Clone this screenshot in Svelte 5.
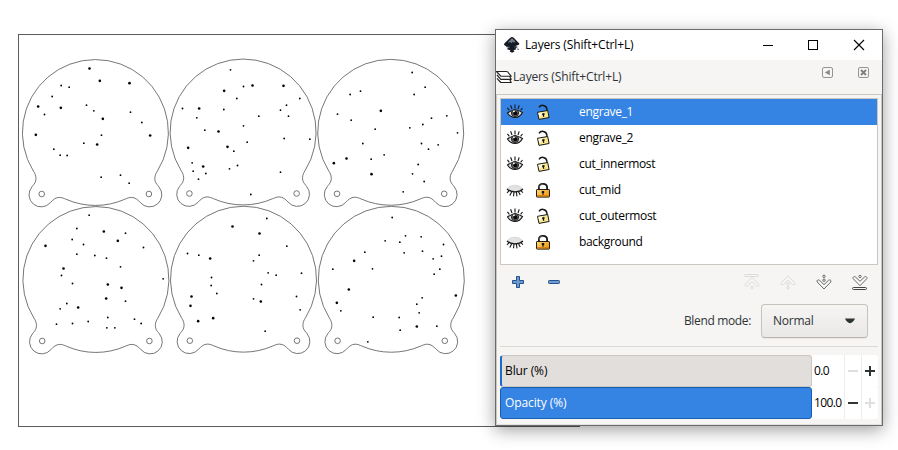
<script>
  const outline =
    'M-62 38.7A73 73 0 1 1 62 38.7C59.2 42.5 58.2 48 61.5 52C62.4 53 63 53.7 63.5 54.5A12.1 12.1 0 0 1 45 70.2C42.4 67.5 40 65 36 65C33.5 65 31.5 66 29.5 66.8A73 73 0 0 1 -29.5 66.8C-31.5 66 -33.5 65 -36 65C-40 65 -42.4 67.5 -45 70.2A12.1 12.1 0 0 1 -63.5 54.5C-63 53.7 -62.4 53 -61.5 52C-58.2 48 -59.2 42.5 -62 38.7Z';

  // Stars are stored in thirds of a pixel from each plate's origin: large ones and small ones.
  const plates = [
    { cx: 95.4, cy: 132.4, x: 10, y: 50,
      big: [[238,55],[269,92],[358,99],[84,169],[152,173],[278,206],[77,254],[420,256],[261,283]],
      small: [[153,106],[177,111],[126,139],[103,193],[229,165],[251,182],[361,186],[395,217],[274,255],[221,279],[131,297],[150,315],[171,316],[273,381],[331,375],[357,399]] },
    { cx: 243.1, cy: 131.9, x: 165, y: 50,
      big: [[177,122],[262,106],[355,107],[102,175],[160,244],[69,293],[187,290],[114,349]],
      small: [[196,59],[235,109],[215,145],[404,145],[52,175],[176,178],[364,165],[346,180],[95,203],[281,198],[370,198],[119,240],[235,227],[357,265],[434,267],[246,276],[206,303],[81,338],[217,346],[193,356],[84,363],[122,370],[100,387],[346,366],[257,433]] },
    { cx: 390.7, cy: 132.2, x: 310, y: 50,
      big: [[212,182],[109,325],[71,339],[184,372]],
      small: [[306,67],[345,111],[120,133],[151,123],[312,133],[82,192],[123,210],[410,197],[364,204],[338,223],[299,233],[195,237],[442,248],[158,280],[334,280],[384,284],[355,297],[222,314],[183,327],[324,343],[307,371],[342,394],[279,425]] },
    { cx: 95.9, cy: 279.4, x: 10, y: 200,
      big: [[281,94],[323,122],[106,137],[160,205],[293,253],[334,263],[288,295],[204,322]],
      small: [[237,45],[200,85],[346,99],[186,118],[220,133],[400,142],[200,162],[254,166],[289,174],[331,200],[154,226],[187,250],[459,236],[346,303],[170,310],[150,326],[293,352],[373,357],[139,372],[187,370],[234,364],[393,370],[290,383],[314,383]] },
    { cx: 243.5, cy: 279.1, x: 165, y: 200,
      big: [[202,79],[283,100],[135,175],[79,289],[76,317],[287,304],[99,363],[144,354]],
      small: [[305,55],[365,138],[67,160],[101,165],[282,165],[265,182],[309,218],[333,225],[409,219],[139,232],[138,256],[289,253],[155,280],[265,296],[394,289],[405,329],[300,393]] },
    { cx: 391.3, cy: 279.2, x: 310, y: 200,
      big: [[132,182],[116,268],[80,308],[437,286],[320,379]],
      small: [[246,52],[286,107],[333,110],[225,122],[269,126],[400,133],[164,156],[282,158],[337,153],[394,168],[369,176],[68,207],[187,206],[389,207],[372,222],[336,293],[320,312],[327,338],[92,332],[189,351],[267,352],[380,378],[270,390],[173,425]] }
  ];

  const layers = [
    { name: 'engrave_1', visible: true, locked: false, selected: true },
    { name: 'engrave_2', visible: true, locked: false },
    { name: 'cut_innermost', visible: true, locked: false },
    { name: 'cut_mid', visible: false, locked: true },
    { name: 'cut_outermost', visible: true, locked: false },
    { name: 'background', visible: false, locked: true }
  ];
</script>

<main>
  <svg class="canvas" width="898" height="450" viewBox="0 0 898 450">
    <rect x="18.5" y="34.5" width="561" height="392" fill="#fff" stroke="#5c5c5c" />
    {#each plates as p}
      <g transform="translate({p.cx} {p.cy})" fill="none" stroke="#666" stroke-width=".9">
        <path d={outline} />
        <circle cx="-53.7" cy="61.6" r="2.8" />
        <circle cx="53.5" cy="61.6" r="2.8" />
      </g>
      {#each p.big as d}<circle cx={p.x + (d[0] + 0.5) / 3} cy={p.y + (d[1] + 0.5) / 3} r="1.3" />{/each}
      {#each p.small as d}<circle cx={p.x + (d[0] + 0.5) / 3} cy={p.y + (d[1] + 0.5) / 3} r=".9" />{/each}
    {/each}
  </svg>

  <section class="dialog">
    <header class="titlebar">
      <svg width="18" height="18" viewBox="0 0 18 18">
        <path d="M9 1Q10 1 11 2L16 7.2Q17 8.6 15 9.1L12.5 10L15 11L12.5 12L13.4 13.2L10.5 14.2L11.5 15.6L9 16.8L6.7 15.5L7.4 14.3L3.5 13L6 11.8L3 10.3L1.2 9Q.7 8 1.8 7L7 2Q8 1 9 1Z" fill="#161a22" />
        <path d="M9 2L12.5 5.6L11 6.7L9.7 5.7L8.5 7.3L7 6L5 7L5.4 5.7Z" fill="#6f7b8d" />
        <path d="M3 10.6L7 11.4M14.2 13L16 13.4M11 11L13 10.7" stroke="#4b5566" />
      </svg>
      <span class="caption">Layers (Shift+Ctrl+L)</span>
      <svg class="winbtns" width="110" height="14" viewBox="0 0 110 14" fill="none" stroke="#000">
        <path d="M3 7.5H13" />
        <rect x="48.5" y="2.5" width="9" height="9" />
        <path d="M94 2L104 12M104 2L94 12" stroke-width="1.1" />
      </svg>
    </header>

    <div class="dockbar">
      <svg width="16" height="14" viewBox="0 0 16 14" fill="#fff" stroke="#222" stroke-width="1.15" stroke-linejoin="round">
        <path d="M1 8.3L4.8 12.5H15.2L13.5 9" />
        <path d="M1 5L4.8 9.3H15.2L13.5 6" />
        <path d="M.5 1.5H10.3Q12 1.7 12.5 3L15.2 6.2H4.8Z" />
      </svg>
      <span class="caption">Layers (Shift+Ctrl+L)</span>
      <svg class="dockbtns" width="48" height="11" viewBox="0 0 48 11" fill="none" stroke="#929595">
        <rect x=".5" y=".5" width="10" height="10" rx="1.5" />
        <path d="M7.8 2.7V8.3L2.8 5.5Z" fill="#868a8a" stroke="none" />
        <rect x="36.5" y=".5" width="10" height="10" rx="1.5" />
        <path d="M39 3L44 8M44 3L39 8" stroke="#7e8282" stroke-width="2" />
      </svg>
    </div>

    <div class="panel">
      <ul class="layers">
        {#each layers as l}
          <li class:selected={l.selected}>
            {#if l.visible}
              <svg class="eye" width="18" height="16" viewBox="0 0 18 16" fill="none" stroke="#171717">
                <path d="M1.5 9Q8.5 3.2 16.5 8.5Q14 13.4 8.8 13.4Q4 13.2 1.5 9Z" fill="#dededc" stroke-width="1.1" />
                <path d="M3.4 6.3L1.4 3.8M6 5L4.6 1.3M9 4.6V.6M12 5L13.2 1.3M14.6 6.3L16.5 4" stroke-width="1.1" />
                <circle cx="9" cy="9" r="3.6" fill="#606060" stroke="#2b2b2b" />
                <circle cx="9.3" cy="9.2" r="2" fill="#080808" stroke="none" />
                <circle cx="7.9" cy="7.3" r=".9" fill="#fff" stroke="none" />
              </svg>
            {:else}
              <svg class="eye" width="18" height="16" viewBox="0 0 18 16" fill="none" stroke="#1c1c1c">
                <path d="M1 7.5Q3 3.2 9 3.2Q15 3.4 17 7.5Q13.5 10 9 10Q4 10 1 7.5Z" fill="#e2e2e2" stroke="#c8c8c8" stroke-width=".6" />
                <path d="M1 7Q4.2 9.8 9 9.8Q14 9.8 17 7" stroke-width="1.2" />
                <path d="M3.4 8.4L1 10.8M5.8 9.4L3.8 13.4M8 10L7.5 14.3M10.3 10L11 14.3M12.4 9.4L14.2 13M14.6 8.4L16.9 10.6" stroke-width="1.15" />
              </svg>
            {/if}
            {#if l.locked}
              <svg class="lock" width="16" height="17" viewBox="0 0 16 17">
                <defs><linearGradient id="gold" x1="0" y1="0" x2="1" y2=".6"><stop stop-color="#ffdc78" /><stop offset="1" stop-color="#f09a18" /></linearGradient></defs>
                <path d="M3.9 7.5V5.5Q3.9 1.8 8 1.8Q12.1 1.8 12.1 5.5V7.5" fill="none" stroke="#171717" stroke-width="1.8" />
                <path d="M4.2 6V5.3Q4.5 2.2 8 2.2" fill="none" stroke="#999" stroke-width=".5" />
                <rect x="1.5" y="7.5" width="13" height="7.6" rx=".6" fill="url(#gold)" stroke="#231b0b" />
                <path d="M2 13.7H14" stroke="#d77a08" /><path d="M6.8 9H9.2V10.9H8.6V12.8H7.4V10.9H6.8Z" fill="#111" />
              </svg>
            {:else}
              <svg class="lock" width="16" height="17" viewBox="0 0 16 17">
                <path d="M4 3.3Q5.5 1 8.3 1.4Q11.5 1.8 11.9 5.2L12.2 7" fill="none" stroke="#171717" stroke-width="1.5" />
                <path d="M2.5 8.3L12.7 6.5L14.1 13.5L4 15.4Z" fill="#f9e88e" stroke="#171717" stroke-linejoin="round" />
                <path d="M3.3 9L8.5 8.2L4.6 13.2Z" fill="#fffce6" />
                <path d="M7 9.5L9.4 9.1L9.6 10.8L9 11L9.3 12.8L8.2 13L7.9 11.3L7.3 11.3Z" fill="#111" />
              </svg>
            {/if}
            <span>{l.name}</span>
          </li>
        {/each}
      </ul>

      <div class="tools">
        <svg width="12" height="12" viewBox="0 0 12 12"><path d="M4.5 .5H7.5V4.5H11.5V7.5H7.5V11.5H4.5V7.5H.5V4.5H4.5Z" fill="#6d9bd0" stroke="#25518c" stroke-linejoin="round" /></svg>
        <svg class="minus" width="12" height="12" viewBox="0 0 12 12"><rect x=".5" y="4.5" width="11" height="3" rx=".8" fill="#709cd0" stroke="#25518c" /></svg>
        <svg class="arrows" width="126" height="18" viewBox="0 0 126 18">
          {#snippet chevron()}
            <path d="M1.2 7.2Q.5 5.8 1.8 5.2Q2.8 4.8 3.6 5.6L8 9.8L12.4 5.6Q13.2 4.8 14.2 5.2Q15.5 5.8 14.8 7.2L8 14.2Z" />
          {/snippet}
          <g fill="none" stroke="#dcdcda">
            <g transform="translate(1 18.5) scale(1 -1)">{@render chevron()}<circle cx="8" cy="4.2" r="1.2" /></g>
            <rect x="1.5" y="1.5" width="14" height="2" rx="1" />
            <g transform="translate(37 17) scale(1 -1)">{@render chevron()}<circle cx="8" cy="6" r="1.2" /><circle cx="8" cy="2.2" r="1.2" /></g>
          </g>
          <g fill="none" stroke="#666b6b">
            <g transform="translate(73 1.8)">{@render chevron()}<circle cx="8" cy="5.4" r="1.2" /><circle cx="8" cy="1.5" r="1.2" /></g>
            <g transform="translate(109 -1.5)">{@render chevron()}<circle cx="8" cy="5" r="1.2" /></g>
            <rect x="109.5" y="14.5" width="14" height="2" rx="1" stroke="#444" />
          </g>
        </svg>
      </div>

      <div class="blend">
        <label for="mode">Blend mode:</label>
        <button id="mode"><span>Normal</span><svg width="10" height="6" viewBox="0 0 10 6"><path d="M0 .5H10Q8 4.8 5 5.2Q2 4.8 0 .5Z" fill="#2e3436" /></svg></button>
      </div>

      <div class="sliders">
        <div class="slider">
          <div class="track blur">Blur (%)</div><div class="value">0.0</div>
          <div class="step"><svg width="10" height="10"><path d="M0 5H10" stroke="#dedede" stroke-width="2" /></svg></div>
          <div class="step"><svg width="10" height="10"><path d="M0 5H10M5 0V10" stroke="#2e3436" stroke-width="2" /></svg></div>
        </div>
        <div class="slider">
          <div class="track opacity">Opacity (%)</div><div class="value">100.0</div>
          <div class="step"><svg width="10" height="10"><path d="M0 5H10" stroke="#2e3436" stroke-width="2" /></svg></div>
          <div class="step"><svg width="10" height="10"><path d="M0 5H10M5 0V10" stroke="#dedede" stroke-width="2" /></svg></div>
        </div>
      </div>
    </div>
  </section>
</main>

<style>
  :global(body) { margin: 0; background: #fff; }
  main { position: relative; width: 898px; height: 450px; overflow: hidden; background: #fff; font: 12px/16px "Open Sans", "Noto Sans", sans-serif; color: #000; }
  * { box-sizing: border-box; }
  svg { display: block; flex: none; }
  .dialog { position: absolute; left: 495px; top: 29px; width: 388px; height: 397px; border: 1px solid #6b6b6b; background: #f6f5f4; box-shadow: 0 4px 16px rgba(0, 0, 0, .38); display: flex; flex-direction: column; white-space: nowrap; }
  .titlebar { height: 30px; background: #fff; display: flex; align-items: center; padding-left: 7px; }
  .titlebar .caption { margin-left: 4px; letter-spacing: -.15px; }
  .winbtns { margin-left: auto; margin-right: 12px; }
  .dockbar { height: 34px; display: flex; align-items: center; color: #2e3436; }
  .dockbar .caption { margin-left: 1px; letter-spacing: -.15px; }
  .dockbtns { margin: 0 12px 9px auto; }
  .panel { flex: 1; border: 1px solid #cdc7c2; border-bottom-color: #e4e1de; padding: 3px; display: flex; flex-direction: column; }
  .layers { margin: 0; padding: 0; list-style: none; height: 167px; border: 1px solid #cdc7c2; background: #fff; }
  .layers li { height: 26px; display: flex; align-items: center; padding-left: 5px; letter-spacing: -.32px; }
  .layers li.selected { background: #3584e4; color: #fff; }
  .lock { margin-left: 11px; }
  .layers span { margin-left: 28px; }
  .tools { height: 34px; display: flex; align-items: center; padding-left: 12px; }
  .minus { margin-left: 24px; }
  .arrows { margin-left: auto; margin-right: 9px; }
  .blend { height: 48px; padding: 5px 10px 0 0; display: flex; justify-content: flex-end; color: #2e3436; border-bottom: 1px solid #dbd8d5; letter-spacing: -.35px; }
  .blend label { margin: 9px 10px 0 0; }
  .blend button { width: 107px; height: 34px; padding: 0 12px 0 11px; display: flex; align-items: center; justify-content: space-between; border: 1px solid #c8c2bd; border-bottom-color: #bab3ad; border-radius: 4px; background: linear-gradient(#f6f5f4, #e9e8e6); font: inherit; letter-spacing: -.25px; color: inherit; box-shadow: 0 1px 1px rgba(0, 0, 0, .06); }
  .sliders { margin-top: 8px; }
  .slider { display: flex; height: 32px; background: #fff; border-radius: 0 3px 3px 0; }
  .track { width: 312px; padding: 7px 0 0 4px; border: 1px solid #cdc7c2; border-radius: 3px; letter-spacing: -.1px; }
  .blur { background: #e1dedb; border-left: 2px solid #1b6acb; padding-left: 3px; }
  .opacity { background: #3584e4; color: #fff; border-color: #185fb4; }
  .value { width: 32px; padding: 8px 0 0 2px; letter-spacing: -.65px; }
  .step { width: 17px; border-left: 1px solid #eeedec; display: flex; align-items: center; justify-content: center; }
</style>
